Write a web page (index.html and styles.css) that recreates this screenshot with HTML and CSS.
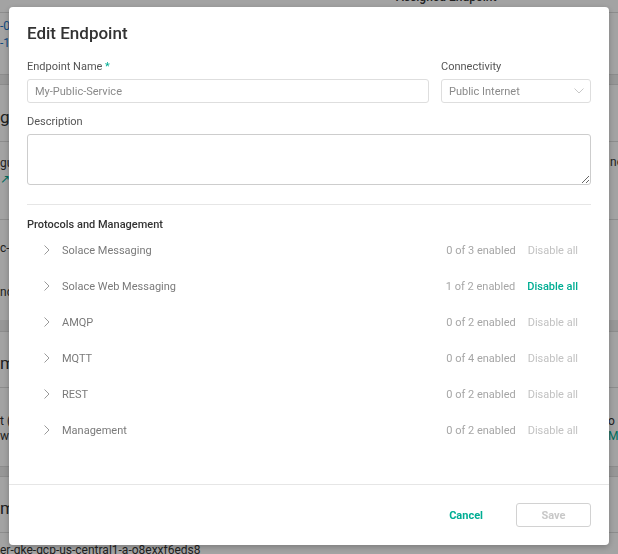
FILE: index.html
```html
<!DOCTYPE html>
<html lang="en">
<head>
<meta charset="utf-8">
<title>Edit Endpoint</title>
<link rel="stylesheet" href="styles.css">
</head>
<body>
<div class="page">
  <div class="bg-row bg-head"><span class="bg-right-title">Assigned Endpoint</span></div>
  <div class="bg-row bg-r1"><span class="bg-l link">-0</span><span class="bg-l link">-1</span></div>
  <div class="bg-band"></div>
  <div class="bg-row bg-title"><span class="bg-l big">gu</span></div>
  <div class="bg-row bg-r3"><span class="bg-l">gu</span><span class="bg-l ext">&#8599;</span><span class="bg-r">ne</span></div>
  <div class="bg-row bg-r4"><span class="bg-l">c-</span><span class="bg-l second">nd</span></div>
  <div class="bg-band bg-band2"></div>
  <div class="bg-row bg-title2"><span class="bg-l big">m</span></div>
  <div class="bg-row bg-r6"><span class="bg-l">t (</span><span class="bg-l">w</span><span class="bg-r r-one">o S</span><span class="bg-r r-two">MP</span></div>
  <div class="bg-band"></div>
  <div class="bg-row bg-title3"><span class="bg-l big">m</span></div>
  <div class="bg-row bg-last"><span class="bg-bottom">er-gke-gcp-us-central1-a-o8exxf6eds8</span></div>
</div>
<div class="backdrop"></div>
<div class="modal">
  <h1 class="modal-title">Edit Endpoint</h1>
  <div class="modal-body">
    <div class="field-row">
      <div class="field grow">
        <label class="label">Endpoint Name <span class="req">*</span></label>
        <div class="input">My-Public-Service</div>
      </div>
      <div class="field fixed">
        <label class="label">Connectivity</label>
        <div class="input select">
          <span>Public Internet</span>
          <svg class="chev-down" width="10" height="6" viewBox="0 0 10 6"><path d="M0.5 0.5 L5 5 L9.5 0.5" fill="none" stroke="#c8c8c8" stroke-width="1"/></svg>
        </div>
      </div>
    </div>
    <div class="field">
      <label class="label">Description</label>
      <textarea class="textarea"></textarea>
    </div>
    <div class="divider"></div>
    <div class="section-title">Protocols and Management</div>
    <ul class="proto-list">
      <li class="proto"><svg class="chev" width="6" height="10" viewBox="0 0 6 10"><path d="M0.5 0.5 L5 5 L0.5 9.5" fill="none" stroke="#9a9a9a" stroke-width="1"/></svg><span class="proto-name">Solace Messaging</span><span class="count">0 of 3 enabled</span><span class="action">Disable all</span></li>
      <li class="proto"><svg class="chev" width="6" height="10" viewBox="0 0 6 10"><path d="M0.5 0.5 L5 5 L0.5 9.5" fill="none" stroke="#9a9a9a" stroke-width="1"/></svg><span class="proto-name">Solace Web Messaging</span><span class="count">1 of 2 enabled</span><span class="action active">Disable all</span></li>
      <li class="proto"><svg class="chev" width="6" height="10" viewBox="0 0 6 10"><path d="M0.5 0.5 L5 5 L0.5 9.5" fill="none" stroke="#9a9a9a" stroke-width="1"/></svg><span class="proto-name">AMQP</span><span class="count">0 of 2 enabled</span><span class="action">Disable all</span></li>
      <li class="proto"><svg class="chev" width="6" height="10" viewBox="0 0 6 10"><path d="M0.5 0.5 L5 5 L0.5 9.5" fill="none" stroke="#9a9a9a" stroke-width="1"/></svg><span class="proto-name">MQTT</span><span class="count">0 of 4 enabled</span><span class="action">Disable all</span></li>
      <li class="proto"><svg class="chev" width="6" height="10" viewBox="0 0 6 10"><path d="M0.5 0.5 L5 5 L0.5 9.5" fill="none" stroke="#9a9a9a" stroke-width="1"/></svg><span class="proto-name">REST</span><span class="count">0 of 2 enabled</span><span class="action">Disable all</span></li>
      <li class="proto"><svg class="chev" width="6" height="10" viewBox="0 0 6 10"><path d="M0.5 0.5 L5 5 L0.5 9.5" fill="none" stroke="#9a9a9a" stroke-width="1"/></svg><span class="proto-name">Management</span><span class="count">0 of 2 enabled</span><span class="action">Disable all</span></li>
    </ul>
  </div>
  <div class="modal-footer">
    <button class="btn-link">Cancel</button>
    <button class="btn-save">Save</button>
  </div>
</div>
</body>
</html>
```
FILE: styles.css
```css
* { box-sizing: border-box; }
html, body { margin: 0; padding: 0; }
body {
  width: 618px;
  height: 554px;
  overflow: hidden;
  font-family: Roboto, "Noto Sans", sans-serif;
  background: #fff;
  position: relative;
}

/* background page (sits behind the dimmed backdrop) */
.page { display: flex; flex-direction: column; font-size: 12px; color: #333; }
.bg-row { position: relative; border-bottom: 1px solid #dcdcdc; white-space: nowrap; }
.bg-band { height: 10px; background: #ececec; border-bottom: 1px solid #dcdcdc; }
.bg-band2 { height: 12px; }
.bg-head { height: 13px; }
.bg-right-title { position: absolute; left: 396px; top: -10px; font-weight: 500; font-size: 12px; line-height: 14px; }
.bg-l { display: block; line-height: 17px; }
.bg-r { position: absolute; left: 610px; line-height: 15px; }
.link { color: #1a73c8; }
.big { font-size: 17px; line-height: 20px; }
.ext { color: #00ad93; line-height: 14px; }
.bg-r1 { height: 62px; padding-top: 5px; }
.bg-title { height: 57px; padding-top: 22px; }
.bg-r3 { height: 78px; padding-top: 13px; }
.bg-r3 .bg-r { top: 13px; }
.bg-r4 { height: 100px; padding-top: 20px; border-bottom: none; }
.bg-r4 .second { margin-top: 27px; }
.bg-title2 { height: 56px; padding-top: 21px; }
.bg-r6 { height: 79px; padding-top: 26px; }
.bg-r6 .bg-l { line-height: 15px; }
.r-one { top: 26px; left: 608px; }
.r-two { top: 41px; left: 608px; color: #00ad93; }
.bg-title3 { height: 56px; padding-top: 21px; }
.bg-last { height: 21px; border-bottom: none; }
.bg-bottom { display: block; line-height: 14px; padding-top: 10px; }

.backdrop {
  position: fixed;
  inset: 0;
  background: rgba(0, 0, 0, 0.36);
}

/* modal */
.modal {
  position: fixed;
  left: 9px;
  top: 7px;
  width: 600px;
  height: 538px;
  background: #fff;
  border-radius: 4px;
  box-shadow: 0 2px 6px rgba(0, 0, 0, 0.25);
  display: flex;
  flex-direction: column;
}
.modal-title {
  margin: 0;
  padding: 16px 18px 0;
  font-size: 17px;
  line-height: 20px;
  font-weight: 500;
  color: #333;
}
.modal-body {
  flex: 1;
  padding: 0 18px;
  display: flex;
  flex-direction: column;
}
.field-row { display: flex; gap: 12px; margin-top: 17px; }
.field { display: flex; flex-direction: column; }
.grow { flex: 1; }
.fixed { width: 150px; }
.label {
  font-size: 11px;
  line-height: 14px;
  color: #555;
  margin-bottom: 5px;
}
.req { color: #00ad93; }
.input {
  height: 24px;
  border: 1px solid #dedede;
  border-radius: 3px;
  font-size: 11px;
  color: #8a8a8a;
  padding: 0 7px;
  display: flex;
  align-items: center;
}
.select { justify-content: space-between; padding-right: 6px; }
.field-row + .field { margin-top: 12px; }
.textarea {
  height: 51px;
  border: 1px solid #cdcdcd;
  border-radius: 3px;
  font-family: inherit;
  font-size: 11px;
  resize: vertical;
  width: 100%;
  margin: 0;
  padding: 4px 7px;
}
.divider { height: 1px; background: #e6e6e6; margin-top: 19px; }
.section-title {
  margin-top: 13px;
  font-size: 11px;
  line-height: 14px;
  font-weight: 500;
  color: #333;
}
.proto-list { list-style: none; margin: 0; padding: 0; }
.proto {
  height: 36px;
  display: flex;
  align-items: center;
  font-size: 11px;
  color: #7a7a7a;
  padding-left: 17px;
  padding-right: 13px;
}
.chev { flex: none; margin-right: 12px; }
.proto-name { flex: 1; }
.count { color: #a6a6a6; }
.action { color: #c2c2c2; margin-left: 12px; }
.action.active { color: #00ad93; font-weight: 500; }

.modal-footer {
  height: 61px;
  border-top: 1px solid #e6e6e6;
  display: flex;
  align-items: center;
  justify-content: flex-end;
  padding: 0 18px;
  gap: 33px;
}
.btn-link {
  border: none;
  background: none;
  font-family: inherit;
  font-size: 11px;
  font-weight: 700;
  color: #00ad93;
  padding: 0;
}
.btn-save {
  width: 75px;
  height: 24px;
  border: 1px solid #d2d2d2;
  border-radius: 3px;
  background: #fff;
  font-family: inherit;
  font-size: 11px;
  font-weight: 700;
  color: #c8c8c8;
}
```
